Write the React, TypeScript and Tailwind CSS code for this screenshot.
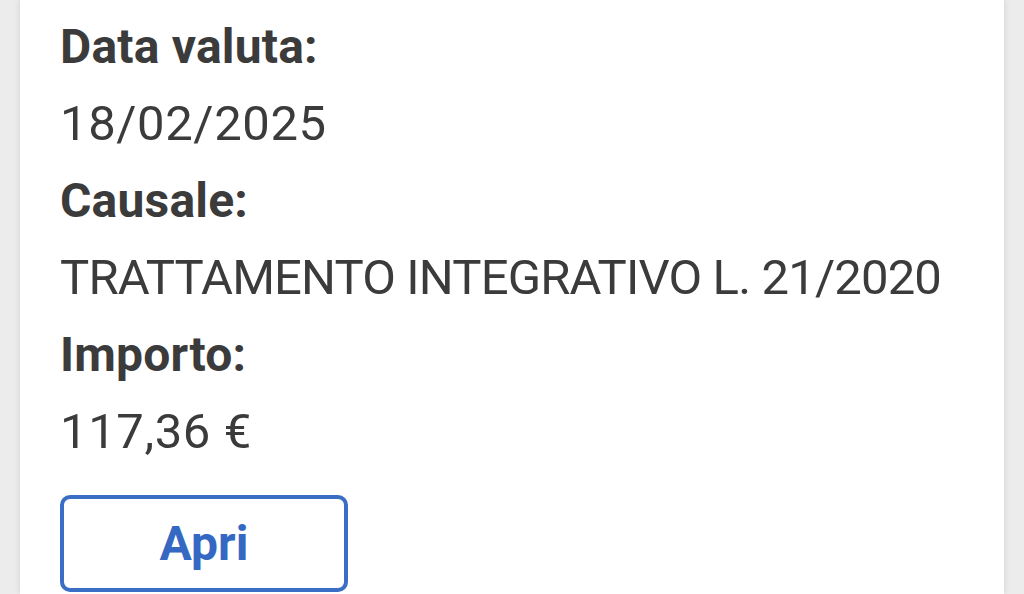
import React from 'react';

const rows: { label: string; value: string; tracking: string }[] = [
  { label: 'Data valuta:', value: '18/02/2025', tracking: 'tracking-[0.6px]' },
  { label: 'Causale:', value: 'TRATTAMENTO INTEGRATIVO L. 21/2020', tracking: 'tracking-[-0.85px]' },
  { label: 'Importo:', value: '117,36 €', tracking: 'tracking-[0.6px]' },
];

export default function App() {
  return (
    <div className="w-[1024px] h-[594px] overflow-hidden bg-[#ececec] px-[20px] font-['Roboto',sans-serif]">
      <div className="h-full bg-white shadow-[0_0_6px_rgba(0,0,0,0.12)] pl-[40px] pt-[8px]">
        {rows.map((r) => (
          <div key={r.label} className="whitespace-nowrap text-[#3b3b3b]">
            <div className="text-[48px] leading-[77px] font-bold tracking-[0.2px]">{r.label}</div>
            <div className={`text-[49px] leading-[77px] ${r.tracking}`}>{r.value}</div>
          </div>
        ))}
        <button className="mt-[25px] w-[288px] h-[97px] rounded-[10px] border-[4px] border-[#3a6ec4] text-[#3468c2] text-[48px] font-bold">
          Apri
        </button>
      </div>
    </div>
  );
}
